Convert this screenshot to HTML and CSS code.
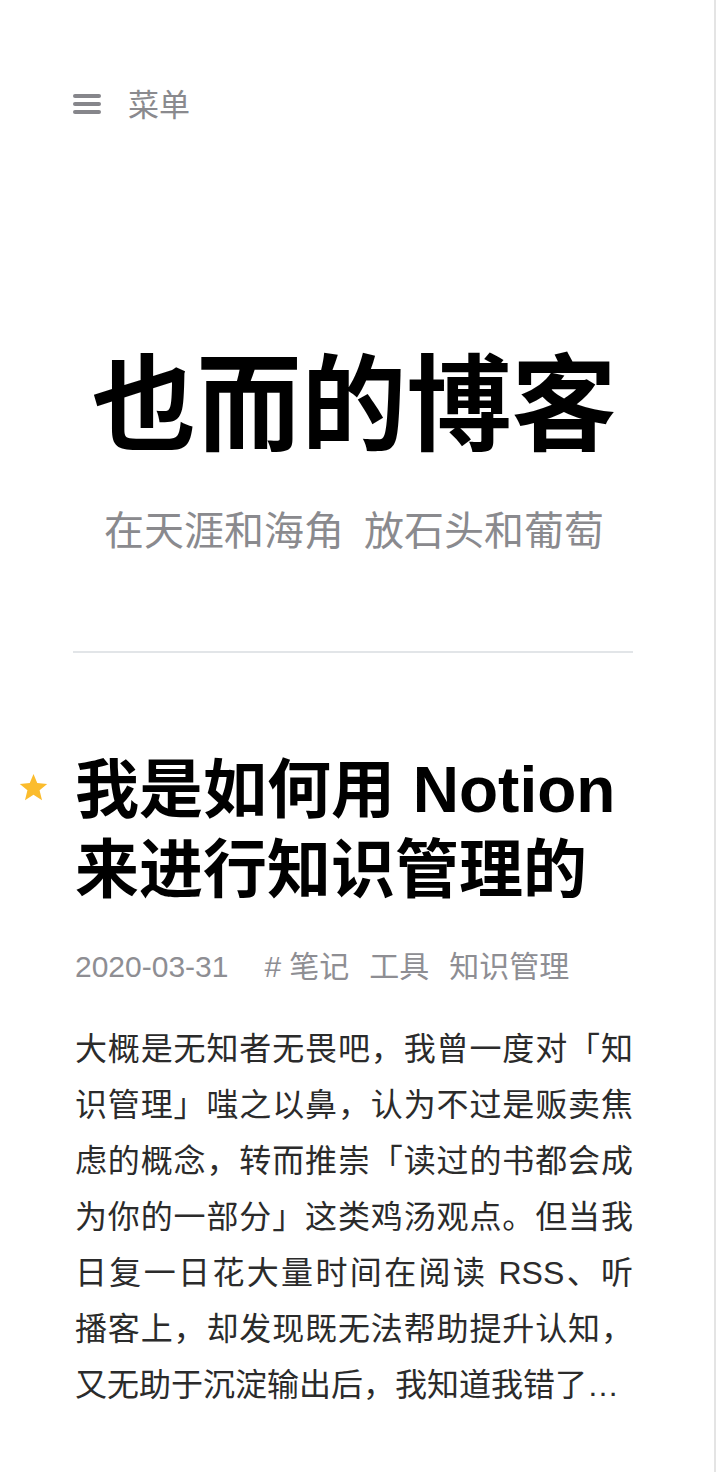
FILE: index.html
```html
<!DOCTYPE html>
<html lang="zh-CN">
<head>
<meta charset="utf-8">
<title>也而的博客</title>
<link rel="stylesheet" href="styles.css">
</head>
<body>
<div class="page">
  <header class="topbar">
    <a class="menu" href="#">
      <span class="burger"><i></i><i></i><i></i></span>
      <span class="menu-label">菜单</span>
    </a>
  </header>

  <section class="hero">
    <h1 class="site-title">也而的博客</h1>
    <p class="site-desc">在天涯和海角 放石头和葡萄</p>
  </section>

  <hr class="divider">

  <article class="post">
    <svg class="star" viewBox="0 0 24 24" width="31" height="31" aria-hidden="true">
      <polygon points="12,1.5 14.9,8.6 22.6,9.2 16.7,14.2 18.6,21.8 12,17.7 5.4,21.8 7.3,14.2 1.4,9.2 9.1,8.6" fill="#fbbc2d"/>
    </svg>
    <h2 class="post-title">我是如何用 Notion 来进行知识管理的</h2>
    <div class="post-meta">
      <span class="date">2020-03-31</span>
      <span class="tags"><span class="hash">#</span><a href="#">笔记</a><a href="#">工具</a><a href="#">知识管理</a></span>
    </div>
    <p class="excerpt">大概是无知者无畏吧，我曾一度对「知识管理」嗤之以鼻，认为不过是贩卖焦虑的概念，转而推崇「读过的书都会成为你的一部分」这类鸡汤观点。但当我日复一日花大量时间在阅读 RSS、听播&#8288;客&#8288;上&#8288;，却发现既无法帮助提升认知，又无助于沉淀输出后，我知道我错了…</p>
  </article>
</div>
</body>
</html>
```

FILE: styles.css
```css
html, body {
  margin: 0;
  padding: 0;
  background: #fff;
}

body {
  font-family: "Liberation Sans", "Noto Sans CJK SC", sans-serif;
  color: #2b2b2b;
}

.page {
  box-sizing: border-box;
  width: 716px;
  min-height: 1472px;
  border-right: 2px solid #e4e4e4;
}

.topbar {
  padding: 84px 0 0 73px;
  height: 40px;
}

.menu {
  display: inline-flex;
  align-items: center;
  gap: 27px;
  text-decoration: none;
  color: #8a8a8e;
  font-size: 31px;
  line-height: 40px;
}

.burger {
  display: flex;
  flex-direction: column;
  gap: 4px;
  width: 28px;
  margin-top: -3px;
}

.burger i {
  display: block;
  height: 4px;
  border-radius: 2px;
  background: #86868b;
}

.hero {
  text-align: center;
  margin-top: 215px;
}

.site-title {
  margin: 0;
  padding-right: 6px;
  font-size: 105px;
  line-height: 134px;
  font-weight: 700;
  color: #000;
}

.site-desc {
  margin: 28px 0 0;
  padding-right: 6px;
  font-size: 40px;
  line-height: 60px;
  color: #8a8a8e;
  word-spacing: 9px;
}

.divider {
  margin: 90px 81px 0 73px;
  border: 0;
  height: 2px;
  background: #e2e5e8;
}

.post {
  position: relative;
  margin-top: 97px;
  padding: 0 81px 0 75px;
}

.star {
  position: absolute;
  left: 18px;
  top: 22px;
}

.post-title {
  margin: 0;
  font-size: 64px;
  line-height: 80px;
  font-weight: 700;
  color: #000;
}

.post-meta {
  margin-top: 35px;
  font-size: 30px;
  line-height: 44px;
  color: #8e8e93;
  display: flex;
}

.tags {
  margin-left: 36px;
  display: flex;
}

.hash {
  margin-right: 8px;
}

.tags a {
  color: inherit;
  text-decoration: none;
  margin-right: 20px;
}

.excerpt {
  margin: 32px 0 0;
  font-size: 32px;
  line-height: 56px;
  text-align: justify;
  color: #2b2b2b;
}
```
